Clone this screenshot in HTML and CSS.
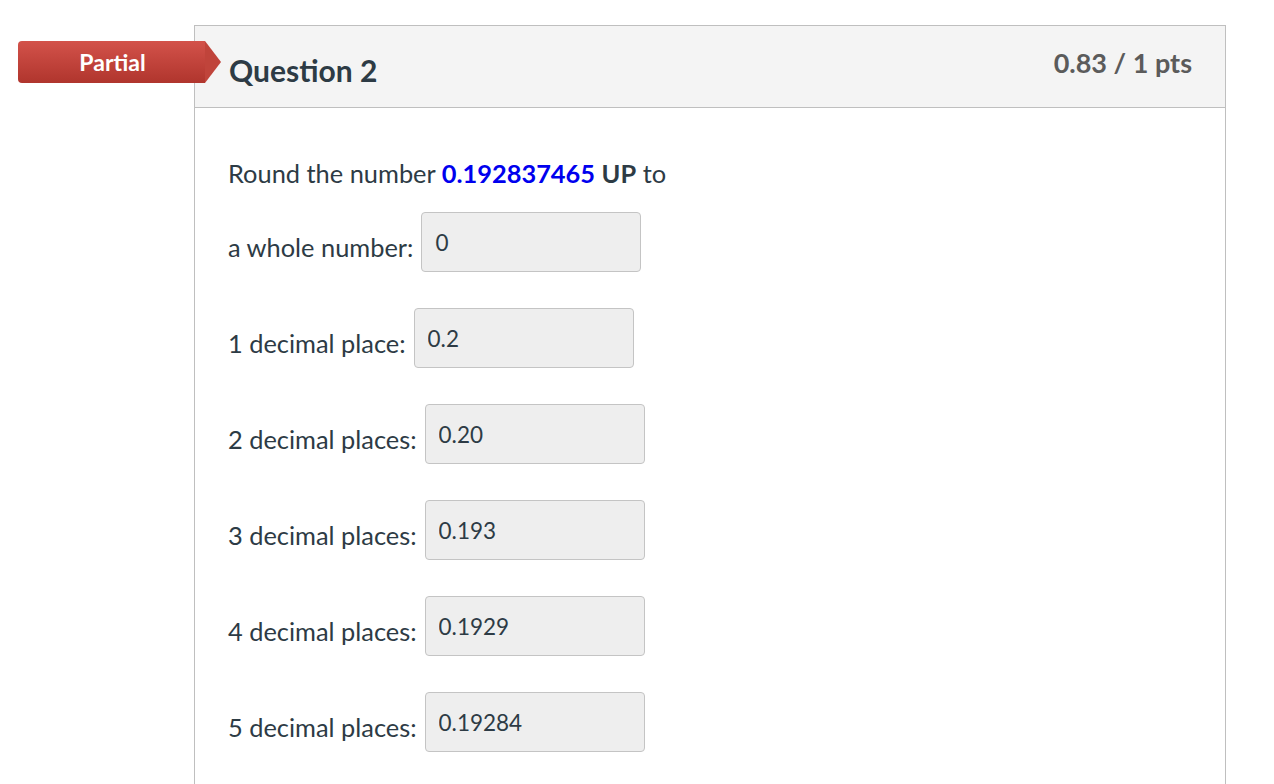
FILE: index.html
```html
<!DOCTYPE html>
<html lang="en">
<head>
<meta charset="UTF-8" />
<title>Question 2</title>
<link rel="stylesheet" href="styles.css">
</head>
<body>
  <div class="quiz">
    <div class="badge">Partial</div>
    <div class="question">
      <div class="question-header">
        <h2 class="question-name">Question 2</h2>
        <div class="points">0.83 / 1 pts</div>
      </div>
      <div class="question-body">
        <p class="prompt">Round the number <span class="number">0.192837465</span> <b>UP</b> to</p>
        <div class="answer-row">
          <label>a whole number:</label>
          <input type="text" value="0" />
        </div>
        <div class="answer-row">
          <label>1 decimal place:</label>
          <input type="text" value="0.2" />
        </div>
        <div class="answer-row">
          <label>2 decimal places:</label>
          <input type="text" value="0.20" />
        </div>
        <div class="answer-row">
          <label>3 decimal places:</label>
          <input type="text" value="0.193" />
        </div>
        <div class="answer-row">
          <label>4 decimal places:</label>
          <input type="text" value="0.1929" />
        </div>
        <div class="answer-row">
          <label>5 decimal places:</label>
          <input type="text" value="0.19284" />
        </div>
      </div>
    </div>
  </div>
</body>
</html>
```

FILE: styles.css
```css
body {
  margin: 0;
  background-color: #fff;
  color: #2d3b45;
  font-family: 'Lato', 'Noto Sans', sans-serif;
}
.quiz {
  position: relative;
  padding: 25px 0 0 194px;
  width: 1032px;
}
.badge {
  position: absolute;
  top: 41px;
  left: 18px;
  width: 187px;
  height: 42px;
  line-height: 42px;
  text-align: center;
  padding-left: 2px;
  box-sizing: border-box;
  color: #fff;
  font-size: 23px;
  font-weight: bold;
  background: linear-gradient(#d3524a, #b0352d);
  border-radius: 4px 0 0 4px;
}
.badge::after {
  content: "";
  position: absolute;
  top: 0;
  right: -16px;
  border-top: 21px solid transparent;
  border-bottom: 21px solid transparent;
  border-left: 16px solid #c0443b;
}
.question {
  border: 1px solid #bfbfbf;
  border-bottom: none;
  min-height: 760px;
}
.question-header {
  display: flex;
  justify-content: space-between;
  background-color: #f4f4f4;
  border-bottom: 1px solid #bfbfbf;
  height: 81px;
  padding: 0 33px 0 34px;
}
.question-name {
  margin: 26px 0 0;
  font-size: 30px;
  font-weight: bold;
  color: #2d3b45;
}
.points {
  margin-top: 20px;
  font-size: 27px;
  font-weight: bold;
  color: #5b5b5b;
}
.question-body {
  padding: 50px 33px 0;
  font-size: 25.4px;
}
.prompt {
  margin: 0 0 24px;
}
.number {
  color: #0000ee;
  font-weight: bold;
}
.answer-row {
  display: flex;
  align-items: center;
  gap: 8px;
  margin-bottom: 36px;
}
.answer-row label {
  margin-top: 10px;
}
.answer-row input {
  width: 220px;
  height: 60px;
  box-sizing: border-box;
  padding: 0 13px;
  font-family: 'Lato', 'Noto Sans', sans-serif;
  font-size: 22.5px;
  color: #2d3b45;
  background-color: #eeeeee;
  border: 1px solid #c4c4c4;
  border-radius: 4px;
}
```
